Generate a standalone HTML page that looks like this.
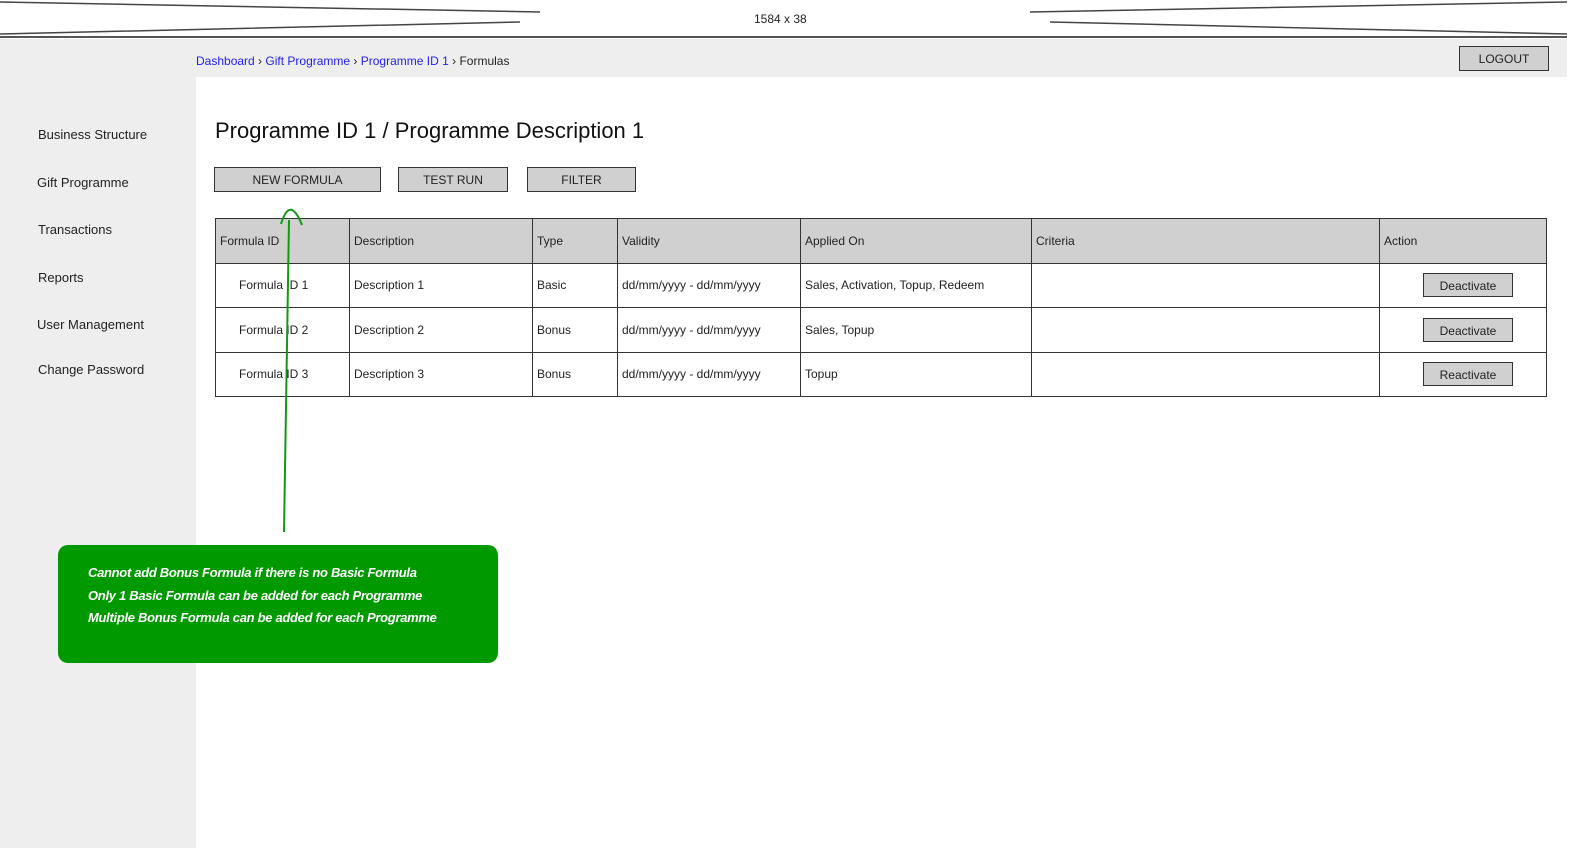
<!DOCTYPE html>
<html><head><meta charset="utf-8"><style>
*{margin:0;padding:0;box-sizing:border-box}
body{width:1580px;height:857px;background:#fff;position:relative;overflow:hidden;font-family:"Liberation Sans",sans-serif;color:#222}
.abs{position:absolute}
.top{left:0;top:0;width:1567px;height:38px;border-bottom:2px solid #555;background:#fff}
.gray{left:0;top:39px;width:1567px;height:809px;background:#eeeeee}
.content{left:196px;top:77px;width:1371px;height:771px;background:#fff}
.nav{left:38px;font-size:13px;color:#222}
.bc{left:196px;top:54px;font-size:12px;color:#222}
.bc a{color:#2222ee;text-decoration:none}
.btn{background:#d0d0d0;border:1.5px solid #333;font-size:12px;text-align:center;line-height:25px;height:25px}
table{position:absolute;left:215px;top:218px;width:1332px;border-collapse:collapse;font-size:12px}
td,th{border:1.5px solid #333;height:44.5px;text-align:left;font-weight:normal;padding-left:4px}
th{background:#d0d0d0}
.sb{background:#d0d0d0;border:1.5px solid #333;width:90px;height:24px;line-height:24px;text-align:center;margin:0 auto 0 39px;font-size:12px}
.note{left:58px;top:545px;width:440px;height:118px;background:#009900;border-radius:10px;color:#fff;font-weight:bold;font-size:13px;padding:17px 30px;line-height:22.5px;font-style:italic;white-space:nowrap;letter-spacing:-0.3px}
</style></head><body>
<div class="abs top"></div>
<svg class="abs" style="left:0;top:0" width="1567" height="38"><path d="M0 2 L540 12 M0 34 L520 22 M1567 2 L1030 12 M1567 34 L1050 22" stroke="#444" stroke-width="1.5" fill="none"/></svg>
<div class="abs" style="left:754px;top:12px;font-size:12px">1584 x 38</div>
<div class="abs gray"></div>
<div class="abs content"></div>
<div class="abs bc"><a>Dashboard</a> › <a>Gift Programme</a> › <a>Programme ID 1</a> › Formulas</div>
<div class="abs btn" style="left:1459px;top:46px;width:90px">LOGOUT</div>
<div class="abs nav" style="top:127px">Business Structure</div>
<div class="abs nav" style="top:175px;left:37px">Gift Programme</div>
<div class="abs nav" style="top:222px">Transactions</div>
<div class="abs nav" style="top:270px">Reports</div>
<div class="abs nav" style="top:317px;left:37px">User Management</div>
<div class="abs nav" style="top:362px">Change Password</div>
<div class="abs" style="left:215px;top:118px;font-size:22px;color:#111">Programme ID 1 / Programme Description 1</div>
<div class="abs btn" style="left:214px;top:167px;width:167px">NEW FORMULA</div>
<div class="abs btn" style="left:398px;top:167px;width:110px">TEST RUN</div>
<div class="abs btn" style="left:527px;top:167px;width:109px">FILTER</div>
<table>
<tr><th style="width:134px">Formula ID</th><th style="width:183px">Description</th><th style="width:85px">Type</th><th style="width:183px">Validity</th><th style="width:231px">Applied On</th><th style="width:348px">Criteria</th><th>Action</th></tr>
<tr><td style="padding-left:23px">Formula ID 1</td><td>Description 1</td><td>Basic</td><td>dd/mm/yyyy - dd/mm/yyyy</td><td>Sales, Activation, Topup, Redeem</td><td></td><td><div class="sb">Deactivate</div></td></tr>
<tr><td style="padding-left:23px">Formula ID 2</td><td>Description 2</td><td>Bonus</td><td>dd/mm/yyyy - dd/mm/yyyy</td><td>Sales, Topup</td><td></td><td><div class="sb">Deactivate</div></td></tr>
<tr><td style="padding-left:23px">Formula ID 3</td><td>Description 3</td><td>Bonus</td><td>dd/mm/yyyy - dd/mm/yyyy</td><td>Topup</td><td></td><td><div class="sb">Reactivate</div></td></tr>
</table>
<svg class="abs" style="left:270px;top:200px" width="50" height="340"><path d="M14 332 L19 20 M11 24 Q20 -5 32 25" stroke="#119911" stroke-width="2" fill="none"/></svg>
<div class="abs note">Cannot add Bonus Formula if there is no Basic Formula<br>Only 1 Basic Formula can be added for each Programme<br>Multiple Bonus Formula can be added for each Programme</div>
</body></html>
